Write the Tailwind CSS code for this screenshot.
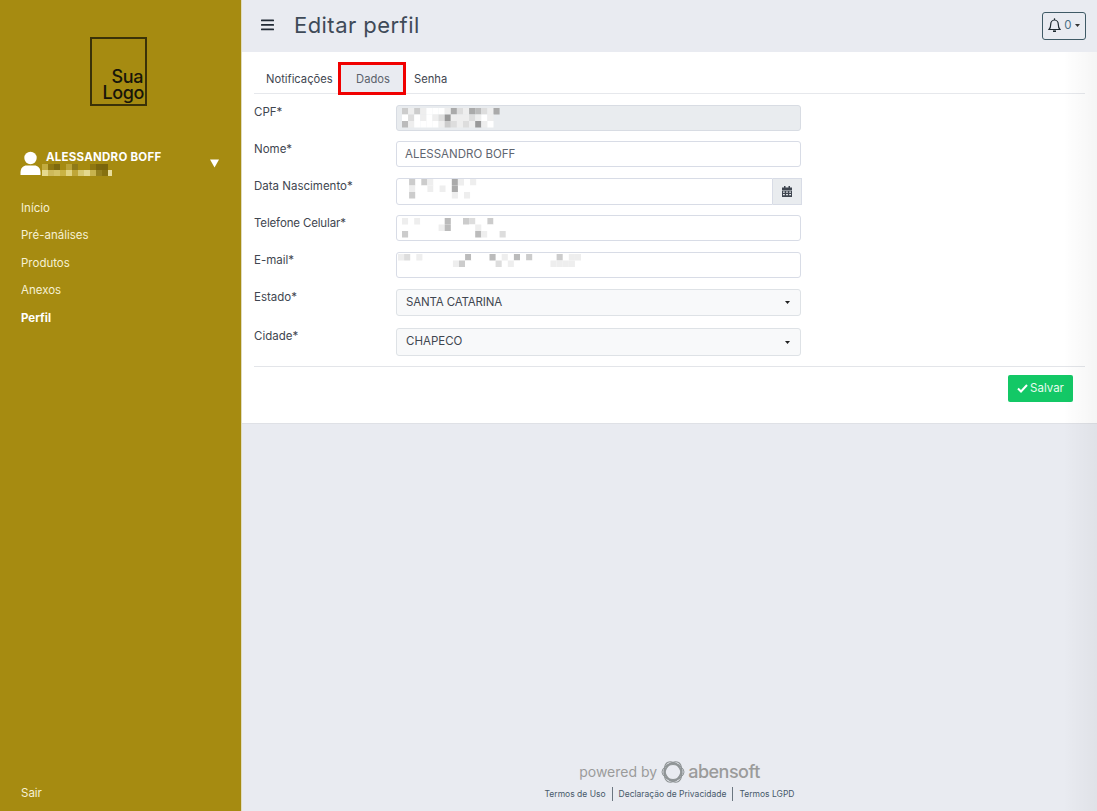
<!DOCTYPE html>
<html lang="pt-BR">
<head>
  <meta charset="UTF-8" />
  <title>Editar perfil</title>
  <script src="https://cdn.jsdelivr.net/npm/@tailwindcss/browser@4"></script>
</head>
<body class="bg-[#e9ebf1] h-[811px] overflow-hidden flex font-['Inter',sans-serif] text-[11.5px] text-[#3f4650]">

  <!-- sidebar -->
  <aside class="w-[242px] h-[811px] shrink-0 bg-[#a68b11] border-r border-[#e0dcc0] flex flex-col text-white">
    <div class="ml-[90px] mt-[37px] w-[57px] h-[69px] border-2 border-[#3a3208] flex flex-col justify-end items-end pr-[1px] pb-[3px] text-[#17150a] font-medium text-[18px] leading-[16px] tracking-[-0.4px]">
      <span class="pr-[1px]">Sua</span>
      <span>Logo</span>
    </div>

    <div class="relative mt-[41px] h-[40px] pl-[46px]">
      <svg class="absolute left-[20px] top-[4px]" width="22" height="25" viewBox="0 0 22 25" fill="#fff">
        <circle cx="10.5" cy="7" r="6.2" />
        <path d="M0.5 24v-2.5c0-4.500 3-7 6-7h8c3 0 6 2.500 6 7V24z" />
      </svg>
      <div class="pt-[3px] font-bold text-[11.5px] leading-[14px] tracking-[0.25px]">ALESSANDRO BOFF</div>
      <svg class="absolute left-[42px] top-[17px]" width="70" height="12">
        <rect x="0" y="0" width="6" height="6" fill="#c2ab3e" /><rect x="6" y="0" width="6" height="6" fill="#8f7710" />
        <rect x="12" y="0" width="6" height="6" fill="#7d690e" /><rect x="24" y="0" width="6" height="6" fill="#bba336" />
        <rect x="30" y="0" width="6" height="6" fill="#8f7a18" /><rect x="48" y="0" width="6" height="6" fill="#8f7710" />
        <rect x="54" y="0" width="6" height="6" fill="#7b660c" /><rect x="60" y="0" width="6" height="6" fill="#7a650b" />
        <rect x="0" y="6" width="6" height="6" fill="#e6d98f" /><rect x="6" y="6" width="6" height="6" fill="#cdb95a" />
        <rect x="12" y="6" width="6" height="6" fill="#d4c264" /><rect x="18" y="6" width="6" height="6" fill="#c9b344" />
        <rect x="24" y="6" width="6" height="6" fill="#e1d37f" /><rect x="30" y="6" width="6" height="6" fill="#bfa637" />
        <rect x="36" y="6" width="6" height="6" fill="#d7c870" /><rect x="42" y="6" width="6" height="6" fill="#e4d88e" />
        <rect x="48" y="6" width="6" height="6" fill="#c7b34e" /><rect x="54" y="6" width="6" height="6" fill="#94801e" />
        <rect x="60" y="6" width="6" height="6" fill="#86710f" /><rect x="66" y="6" width="4" height="6" fill="#e8dd9b" />
      </svg>
      <svg class="absolute left-[209px] top-[12px]" width="11" height="9" viewBox="0 0 11 9" fill="#fff"><path d="M1 0.500h9L5.500 8.500z" /></svg>
    </div>

    <nav class="mt-[7.5px] pl-[21px] flex flex-col text-[#f6f1d4] text-[11.5px]">
      <a class="h-[27.5px] leading-[27.5px]">Início</a>
      <a class="h-[27.5px] leading-[27.5px]">Pré-análises</a>
      <a class="h-[27.5px] leading-[27.5px]">Produtos</a>
      <a class="h-[27.5px] leading-[27.5px]">Anexos</a>
      <a class="h-[27.5px] leading-[27.5px] font-bold text-white">Perfil</a>
    </nav>

    <a class="mt-auto mb-[10px] pl-[21px] text-[#f6f1d4] leading-[16px]">Sair</a>
  </aside>

  <main class="relative flex-1 h-[811px] flex flex-col">
    <!-- header -->
    <header class="h-[52px] shrink-0 flex items-center pl-[19px] pr-[11px]">
      <svg width="13" height="12" viewBox="0 0 13 12" fill="#222b36" class="mt-[-3px]">
        <rect y="0.500" width="13" height="1.800" rx="0.600" /><rect y="5" width="13" height="1.800" rx="0.600" /><rect y="9.500" width="13" height="1.800" rx="0.600" />
      </svg>
      <h1 class="ml-[20px] text-[22px] leading-[28px] text-[#3f4a58] mt-[-3px] tracking-[0.45px]">Editar perfil</h1>
      <button class="ml-auto w-[44px] h-[28px] mt-[-1px] border border-[#3f5a66] rounded-[3px] flex items-center justify-center gap-[3px] text-[#4a6f85] text-[11.5px]">
        <svg width="13" height="15" viewBox="0 0 13 15" fill="none" stroke="#1f2a30" stroke-width="1.200">
          <path d="M1 11.500c1.300-1.300 1.700-2.500 1.700-5C2.700 4 4.300 2 6.500 2s3.800 2 3.800 4.500c0 2.500.4 3.700 1.700 5z" />
          <path d="M6.500 0.300V2" /><path d="M5 13.200h3" stroke-width="1.600" />
        </svg>
        <span>0</span>
        <svg width="5" height="3" viewBox="0 0 5 3" fill="#333"><path d="M0 0h5L2.500 3z" /></svg>
      </button>
    </header>

    <!-- card -->
    <section class="bg-white h-[372px] shrink-0 border-b border-[#dfe1e6] px-[12px] pt-[13px]">
      <div class="flex h-[29px] border-b border-[#e6e8ec] pl-[6px] text-[11.2px]">
        <a class="w-[81px] pl-[6px] leading-[28px]">Notificações</a>
        <a class="w-[63px] h-[28px] bg-[#e9ebf1] pl-[1px] text-center leading-[28px] text-[#5b626c]">Dados</a>
        <a class="ml-[10px] leading-[28px]">Senha</a>
      </div>

      <form class="mt-[11px]">
        <div class="flex h-[26px] mb-[10px]">
          <label class="w-[142px] leading-[14px]">CPF*</label>
          <div class="w-[405px] h-[26px] bg-[#e9ecef] border border-[#d8dce3] rounded-[3px] overflow-hidden">
            <svg data-rows="cecefffeadeabdea,fdfefed9eeedefe,beffffecdede9ef" data-left="5" width="110" height="22"></svg>
          </div>
        </div>
        <div class="flex h-[26px] mb-[11px]">
          <label class="w-[142px] leading-[14px] mt-[1px]">Nome*</label>
          <div class="w-[405px] h-[26px] border border-[#d8dce6] rounded-[3px] pl-[8px] leading-[24px] text-[#5f6670]">ALESSANDRO BOFF</div>
        </div>
        <div class="flex h-[27px] mb-[10px]">
          <label class="w-[142px] leading-[14px] mt-[1px]">Data Nascimento*</label>
          <div class="w-[377px] h-[27px] border border-[#d8dce6] rounded-l-[3px] overflow-hidden">
            <svg data-rows=".c.cef.fae.e,.e.fefefa.ff,.c......e.e" data-left="6" data-top="0" width="110" height="24"></svg>
          </div>
          <div class="w-[29px] h-[27px] bg-[#e9ecef] border border-l-0 border-[#d8dce6] flex items-center justify-center">
            <svg width="10" height="11" viewBox="0 0 10 11" fill="#3f4650">
              <rect x="2" y="0" width="1.500" height="2.500" /><rect x="6.500" y="0" width="1.500" height="2.500" />
              <path d="M0 1.500h10V4H0z" />
              <path fill-rule="evenodd" d="M0 4.500h10V11H0zM1 5.500v1.200h1.800V5.500zm3.100 0v1.200h1.800V5.500zm3.100 0v1.200H9V5.500zM1 8v1.200h1.800V8zm3.100 0v1.200h1.800V8zm3.100 0v1.200H9V8z" />
            </svg>
          </div>
        </div>
        <div class="flex h-[26px] mb-[11px]">
          <label class="w-[142px] leading-[14px] mt-[1px] tracking-[-0.15px]">Telefone Celular*</label>
          <div class="w-[405px] h-[26px] border border-[#d8dce6] rounded-[3px] overflow-hidden">
            <svg data-rows="e.ef...b..cd.fcff,......eb...fe.ff.,c......f.f..bef.d" data-left="5" width="120" height="22"></svg>
          </div>
        </div>
        <div class="flex h-[26px] mb-[11px]">
          <label class="w-[142px] leading-[14px] mt-[1px]">E-mail*</label>
          <div class="w-[405px] h-[26px] border border-[#d8dce6] rounded-[3px] overflow-hidden">
            <svg data-rows="ed.e.f.....bf..b.e.b.c..f.c.ee,....f....ecf.f..d.efffff.eeee" data-left="1" data-top="1" width="200" height="22"></svg>
          </div>
        </div>
        <div class="flex h-[27px] mb-[12px]">
          <label class="w-[142px] leading-[14px] mt-[1px]">Estado*</label>
          <div class="w-[405px] h-[27px] bg-[#f8f9fa] border border-[#dee2e6] rounded-[3px] pl-[9px] pr-[10px] flex items-center justify-between text-[#3f4650]">
            <span class="tracking-[-0.15px]">SANTA CATARINA</span>
            <svg width="5" height="3" viewBox="0 0 5 3" fill="#222"><path d="M0 0h5L2.500 3z" /></svg>
          </div>
        </div>
        <div class="flex h-[28px]">
          <label class="w-[142px] leading-[14px] mt-[1px]">Cidade*</label>
          <div class="w-[405px] h-[28px] bg-[#f8f9fa] border border-[#dee2e6] rounded-[3px] pl-[9px] pr-[10px] flex items-center justify-between text-[#3f4650]">
            <span>CHAPECO</span>
            <svg width="5" height="3" viewBox="0 0 5 3" fill="#222"><path d="M0 0h5L2.500 3z" /></svg>
          </div>
        </div>

        <div class="mt-[10px] border-t border-[#e3e5e9] flex justify-end pr-[12px] pt-[8px]">
          <button type="button" class="w-[65px] h-[27px] bg-[#13c866] rounded-[2px] text-[#e8fbef] flex items-center justify-center gap-[2px]">
            <svg width="11" height="9" viewBox="0 0 11 9" fill="none" stroke="#fff" stroke-width="2"><path d="M1 4.500l3 3 6-6.500" /></svg>
            <span>Salvar</span>
          </button>
        </div>
      </form>
    </section>

    <!-- footer -->
    <footer class="mt-auto mb-[10px] flex flex-col items-center">
      <div class="flex items-center text-[#9b9b9b]">
        <span class="text-[14px] leading-[26px]">powered by</span>
        <svg class="ml-[4px] mr-[3px]" width="24" height="24" viewBox="0 0 24 24" fill="none" stroke="#8f9496" stroke-width="1">
          <g transform="translate(12 12)">
            <ellipse rx="11" ry="7.500" /><ellipse rx="11" ry="7.500" transform="rotate(60)" /><ellipse rx="11" ry="7.500" transform="rotate(120)" />
            <ellipse rx="9.500" ry="8" transform="rotate(30)" /><ellipse rx="9.500" ry="8" transform="rotate(90)" /><ellipse rx="9.500" ry="8" transform="rotate(150)" />
            <circle r="6" fill="#e9ebf1" stroke="none" />
          </g>
        </svg>
        <span class="text-[18px] leading-[26px] font-medium tracking-[-0.5px]">abensoft</span>
      </div>
      <div class="mt-[2px] flex items-center text-[8.500px] leading-[14px] text-[#47596a]">
        <a class="pr-[6px] border-r border-[#6b7680]">Termos de Uso</a>
        <a class="px-[6px] border-r border-[#6b7680]">Declaração de Privacidade</a>
        <a class="pl-[6px]">Termos LGPD</a>
      </div>
    </footer>

    <!-- red highlight over the active tab -->
    <div class="absolute left-[96px] top-[62px] w-[68px] h-[33px] border-[3px] border-[#f00000] pointer-events-none"></div>
    <!-- soft shade at the right edge of the page -->
    <div class="absolute right-0 top-[52px] bottom-0 w-[34px] bg-gradient-to-r from-transparent to-black/4 pointer-events-none"></div>
  </main>

  <script>
    // blurred-out personal data: one hex digit per mosaic cell, dot = empty
    document.querySelectorAll('svg[data-rows]').forEach(function (svg) {
      const left = Number(svg.dataset.left || 6);
      const top = Number(svg.dataset.top || 2);
      let html = '';
      svg.dataset.rows.split(',').forEach(function (row, r) {
        row.split('').forEach(function (c, i) {
          if (c === '.') return;
          html += `<rect x="${left + i * 6.1}" y="${top + r * 6.500}" width="6.100" height="6.500" fill="#${c}${c}${c}${c}${c}${c}" />`;
        });
      });
      svg.innerHTML = html;
    });
  </script>

</body>
</html>
